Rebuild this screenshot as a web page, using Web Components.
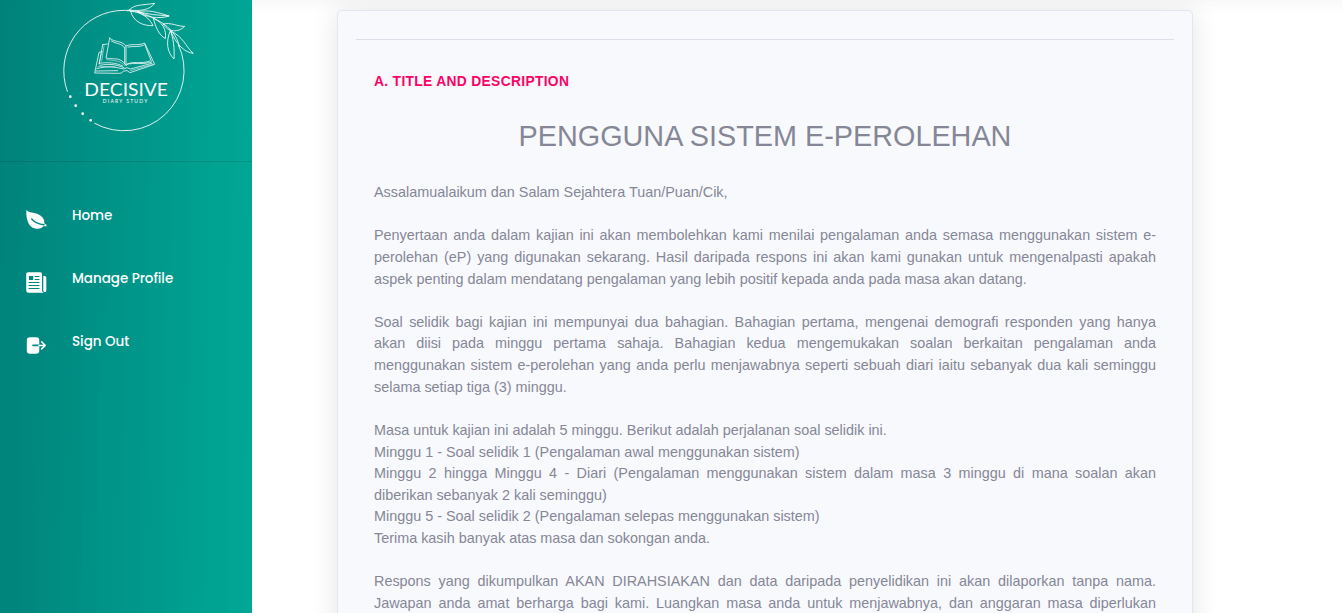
<!DOCTYPE html>
<html lang="ms">
<head>
<meta charset="utf-8">
<title>Decisive Diary Study</title>
<style>
html,body{margin:0;height:100%;overflow:hidden;background:#fff}
</style>
</head>
<body>
<diary-app></diary-app>

<template id="t-app">
<style>
:host{display:flex;height:613px;overflow:hidden;font-family:"Liberation Sans",Arial,sans-serif;color:#858796}
nav{flex:none;width:252px;background:linear-gradient(91deg,#00827b 0%,#00a896 100%)}
.brand{height:161px;border-bottom:1px solid rgba(0,0,0,.12)}
ul{list-style:none;margin:0;padding:22px 0 0}
main{flex:1;min-width:0;background:#fff;padding:10px 0 0 85px;box-shadow:inset 0 18px 18px -18px rgba(0,0,0,.06)}
</style>
<nav>
<div class="brand"><brand-logo></brand-logo></div>
<ul>
<nav-item label="Home"><svg slot="icon" viewBox="0 0 24 24" width="24" height="24"><path fill="#fff" d="M2.500 2C5 5 10 4.300 14 6.200C18.500 8 20.800 11.500 20.300 15.500L22.500 16.800V18.300H19.300C17.500 20.400 15 20.900 12.500 20.700C7 20.300 4 16 2.800 10C2.200 7 2.200 4 2.500 2Z"/><path d="M7.700 11C9.800 13.400 13 16 20 16.800" fill="none" stroke="#00877f" stroke-width="1.400" stroke-linecap="round"/></svg></nav-item>
<nav-item label="Manage Profile"><svg slot="icon" viewBox="0 0 24 24" width="24" height="24"><path fill="#fff" d="M4 1.300H16.300Q18 1.300 18 3V19.500Q18 21 19.700 21.700H4.500Q2.200 21.700 2.200 19.500V3Q2.200 1.300 4 1.300ZM19.300 5H20.700Q22.300 5 22.300 6.500V19.500Q22.300 21.300 20.800 21.300Q19.300 21.300 19.300 19.500Z"/><path fill="#00877f" d="M5 5H9.200V9H5Z"/><path d="M11.200 5.500H15M11.200 8.500H15M5 11.500H15M5 14.500H15M5 17.500H15" stroke="#00877f" stroke-width="1.200" stroke-linecap="round"/></svg></nav-item>
<nav-item label="Sign Out"><svg slot="icon" viewBox="0 0 24 24" width="24" height="24"><path fill="#fff" d="M6 3.200H12Q15.300 3.200 15.300 6.500V10.600H9Q8.200 10.600 8.200 11.400T9 12.200H15.300V16.500Q15.300 19.800 12 19.800H6Q2.800 19.800 2.800 16.500V6.500Q2.800 3.200 6 3.200Z"/><path d="M15 11.400H21M17.600 7.800L21.200 11.400L17.600 15" fill="none" stroke="#fff" stroke-width="1.500" stroke-linecap="round" stroke-linejoin="round"/></svg></nav-item>
</ul>
</nav>
<main>
<study-card heading="A. TITLE AND DESCRIPTION">
<span slot="title">PENGGUNA SISTEM E-PEROLEHAN</span>
<div>Assalamualaikum dan Salam Sejahtera Tuan/Puan/Cik,<br><br>Penyertaan anda dalam kajian ini akan membolehkan kami menilai pengalaman anda semasa menggunakan sistem e-perolehan (eP) yang digunakan sekarang. Hasil daripada respons ini akan kami gunakan untuk mengenalpasti apakah aspek penting dalam mendatang pengalaman yang lebih positif kepada anda pada masa akan datang.<br><br>Soal selidik bagi kajian ini mempunyai dua bahagian. Bahagian pertama, mengenai demografi responden yang hanya akan diisi pada minggu pertama sahaja. Bahagian kedua mengemukakan soalan berkaitan pengalaman anda menggunakan sistem e-perolehan yang anda perlu menjawabnya seperti sebuah diari iaitu sebanyak dua kali seminggu selama setiap tiga (3) minggu.<br><br>Masa untuk kajian ini adalah 5 minggu. Berikut adalah perjalanan soal selidik ini.<br>Minggu 1 - Soal selidik 1 (Pengalaman awal menggunakan sistem)<br>Minggu 2 hingga Minggu 4 - Diari (Pengalaman menggunakan sistem dalam masa 3 minggu di mana soalan akan diberikan sebanyak 2 kali seminggu)<br>Minggu 5 - Soal selidik 2 (Pengalaman selepas menggunakan sistem)<br>Terima kasih banyak atas masa dan sokongan anda.<br><br></div>
<div style="text-align-last:justify">Respons yang dikumpulkan AKAN DIRAHSIAKAN dan data daripada penyelidikan ini akan dilaporkan tanpa nama. Jawapan anda amat berharga bagi kami. Luangkan masa anda untuk menjawabnya, dan anggaran masa diperlukan</div>
</study-card>
</main>
</template>

<template id="t-logo">
<style>
:host{display:block;padding-left:50px}
svg{display:block}
</style>
<svg width="160" height="140" viewBox="0 0 480 420" fill="none" stroke="#fff" stroke-width="2.600" stroke-linecap="round" stroke-linejoin="round">
<path d="M52 274A181 181 0 0 1 222 31H240M385 134A181 181 0 0 1 134 370"/>
<g fill="#fff" stroke="none"><circle cx="61" cy="290" r="4"/><circle cx="77" cy="317" r="4"/><circle cx="98" cy="341" r="4"/><circle cx="122" cy="361" r="4"/></g>
<g stroke-width="2.500">
<path d="M232 32C270 30 306 52 332 66C362 84 382 108 388 140"/>
<path d="M238 30C252 12 280 16 314 10C300 30 270 34 238 30"/>
<path d="M262 35C296 28 326 38 357 48C326 58 288 52 262 35Q306 46 357 48"/>
<path d="M242 34C250 66 280 78 309 77C298 54 276 36 242 34"/>
<path d="M310 55C318 84 326 104 346 116C350 90 338 66 310 55"/>
<path d="M340 72C362 66 384 80 404 79C386 98 352 98 340 72"/>
<path d="M361 92C346 126 352 158 372 177C374 146 370 112 361 92"/>
<path d="M362 94C400 108 406 140 430 160C404 158 378 132 362 94"/>
</g>
<g stroke-width="2.300">
<path d="M179 114C190 128 214 120 228 138C246 130 266 138 284 129L314 193L240 218Q232 207 220 214Q215 221 206 220L134 219L147 157L157 155M179 114L168 174C186 180 211 168 228 196C244 180 272 194 300 183M158 134L148 190M158 134L172 132M148 190C174 186 198 188 218 198M140 206C174 196 200 202 221 207Q232 199 241 207L306 190M138 213L203 212M228 138V196M224 142V190M284 133L304 184M232 192C252 188 278 194 304 187M150 196C180 190 200 194 222 203M184 123C198 132 216 130 222 142M234 141C250 138 268 142 280 136"/>
<path d="M154 160L147 193M162 138L155 184M170 179C190 182 208 180 224 196M241 212L309 193M144 200L196 200" stroke-width="1.500"/>
</g>
<g fill="#fff" stroke="none" font-family="Lato,sans-serif">
<text x="103" y="287" font-size="49" textLength="251" lengthAdjust="spacingAndGlyphs" font-weight="400">DECISIVE</text>
<text x="158" y="308" font-size="15" textLength="134" lengthAdjust="spacing" font-weight="400">DIARY STUDY</text>
</g>
</svg>
</template>

<template id="t-item">
<style>
:host{display:flex;height:63px;padding-left:24px;align-items:flex-start;color:#fff}
.icon{flex:none;width:48px;padding-top:24px}
.label{padding-top:22px;font:500 13.500px/20px Poppins,"Open Sans",sans-serif;letter-spacing:-.04px;white-space:nowrap}
</style>
<span class="icon"><slot name="icon"></slot></span><span class="label"></span>
</template>

<template id="t-card">
<style>
:host{display:block;box-sizing:border-box;width:856px;height:900px;padding:28px 18px;background:#f8f9fd;border:1px solid #e3e6f0;border-radius:5px;box-shadow:0 2px 28px rgba(0,0,0,.11)}
hr{margin:0;border:0;border-top:1px solid #dddfe8}
section{padding:32px 18px 0}
h2{margin:0;font-size:13.800px;line-height:20px;font-weight:700;letter-spacing:.33px;color:#fc0365}
h1{margin:27px 0 28px;font-size:28.800px;line-height:35px;font-weight:400;text-align:center}
.copy{font-size:14.400px;line-height:21.620px;text-align:justify}
</style>
<hr>
<section><h2></h2><h1><slot name="title"></slot></h1><div class="copy"><slot></slot></div></section>
</template>

<script>
const stamp = (host, id) => {
  const root = host.attachShadow({ mode: "open" });
  root.append(document.getElementById(id).content.cloneNode(true));
  return root;
};
customElements.define("brand-logo", class extends HTMLElement {
  connectedCallback() { if (!this.shadowRoot) stamp(this, "t-logo"); }
});
customElements.define("nav-item", class extends HTMLElement {
  connectedCallback() {
    if (this.shadowRoot) return;
    stamp(this, "t-item").querySelector(".label").textContent = this.getAttribute("label");
  }
});
customElements.define("study-card", class extends HTMLElement {
  connectedCallback() {
    if (this.shadowRoot) return;
    stamp(this, "t-card").querySelector("h2").textContent = this.getAttribute("heading");
  }
});
customElements.define("diary-app", class extends HTMLElement {
  connectedCallback() { if (!this.shadowRoot) stamp(this, "t-app"); }
});
</script>
</body>
</html>
